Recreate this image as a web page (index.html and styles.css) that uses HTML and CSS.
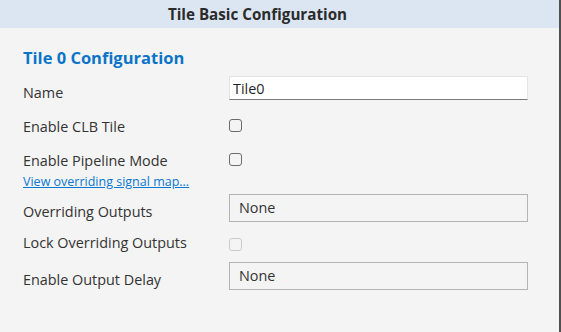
FILE: index.html
```html
<!DOCTYPE html>
<html>
<head>
<meta charset="utf-8">
<link rel="stylesheet" href="styles.css">
</head>
<body>
<div class="app">
  <div class="main">
    <div class="header">Tile Basic Configuration</div>
    <div class="form">
      <h2 class="heading">Tile 0 Configuration</h2>
      <div class="row row-text">
        <label class="label">Name</label>
        <input class="text-input" type="text" value="Tile0">
      </div>
      <div class="row row-check row-clb">
        <label class="label">Enable CLB Tile</label>
        <input class="check" type="checkbox">
      </div>
      <div class="row row-check row-pipe">
        <label class="label">Enable Pipeline Mode</label>
        <input class="check" type="checkbox">
      </div>
      <a class="link" href="#">View overriding signal map...</a>
      <div class="row row-box row-over">
        <label class="label">Overriding Outputs</label>
        <div class="box">None</div>
      </div>
      <div class="row row-check row-lock">
        <label class="label">Lock Overriding Outputs</label>
        <input class="check check-disabled" type="checkbox" disabled>
      </div>
      <div class="row row-box row-delay">
        <label class="label">Enable Output Delay</label>
        <div class="box">None</div>
      </div>
    </div>
  </div>
  <div class="edge"></div>
</div>
</body>
</html>
```

FILE: styles.css
```css
html, body {
  margin: 0;
  padding: 0;
  background: #f4f4f4;
}
body {
  font-family: "Open Sans", "Noto Sans", sans-serif;
  color: #333333;
}
.app {
  display: flex;
  width: 561px;
  height: 332px;
}
.main {
  flex: 1;
  min-width: 0;
}
.edge {
  width: 2px;
  background: #505050;
}
.header {
  height: 28px;
  line-height: 28px;
  background: #dce6f2;
  color: #2b2b2b;
  font-weight: 700;
  font-size: 15.2px;
  text-align: center;
  padding-right: 44px;
}
.form {
  padding-left: 23px;
  display: flex;
  flex-direction: column;
  align-items: flex-start;
}
.heading {
  margin: 20px 0 0 0;
  font-size: 16.5px;
  line-height: 20px;
  font-weight: 700;
  color: #0b74c8;
}
.row {
  display: grid;
  grid-template-columns: 206px 299px;
  align-items: start;
}
.label {
  font-size: 14.4px;
  line-height: 20px;
  color: #333333;
}
.row-text { margin-top: 8px; }
.row-text .label { padding-top: 7px; }
.text-input {
  box-sizing: border-box;
  width: 299px;
  height: 24px;
  margin: 0;
  padding: 0 3px;
  background: #ffffff;
  border: 1px solid #e4e4e4;
  border-bottom-color: #7a7a7a;
  font-family: inherit;
  font-size: 14.4px;
  color: #1f1f1f;
  outline: none;
}
.check {
  appearance: none;
  -webkit-appearance: none;
  box-sizing: border-box;
  width: 13px;
  height: 13px;
  margin: 0;
  border: 1px solid #6b6b6b;
  border-radius: 3px;
  background: transparent;
}
.check-disabled {
  border-color: #cacaca;
}
.row-clb { margin-top: 14px; }
.row-clb .check { margin-top: 2px; }
.row-pipe { margin-top: 14px; }
.row-pipe .check { margin-top: 2px; }
.link {
  margin-top: 3px;
  font-size: 12.5px;
  line-height: 16px;
  color: #0a78d2;
  text-decoration: underline;
}
.box {
  box-sizing: border-box;
  width: 299px;
  height: 28px;
  line-height: 26px;
  border: 1px solid #b3b3b3;
  padding-left: 9px;
  font-size: 14.4px;
  color: #333333;
}
.row-over { margin-top: 4px; }
.row-over .label { padding-top: 8px; }
.row-lock { margin-top: 11px; }
.row-lock .check { margin-top: 5px; }
.row-delay { margin-top: 9px; }
.row-delay .label { padding-top: 8px; }
```
